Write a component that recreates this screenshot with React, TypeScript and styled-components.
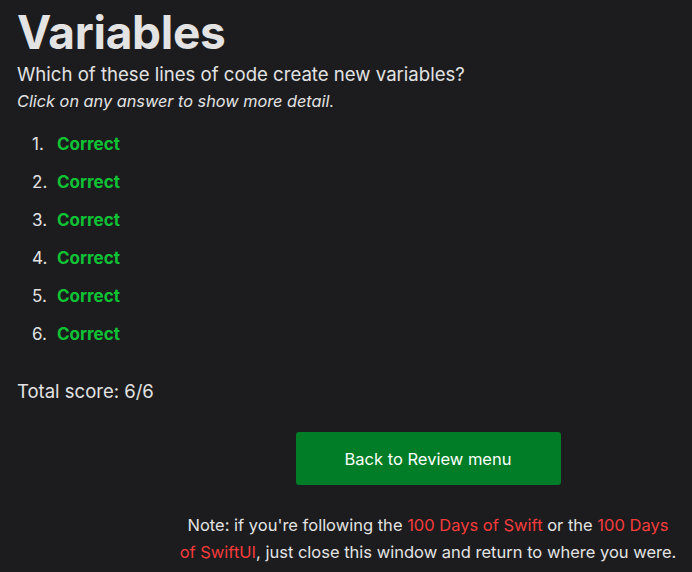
import React from "react";
import styled, { createGlobalStyle } from "styled-components";

const Global = createGlobalStyle`
  html, body { margin: 0; padding: 0; background: #1c1c1e; }
  body { font-family: Inter, "Noto Sans", sans-serif; color: #e3e3e3; }
`;

const Page = styled.main`
  padding: 4px 17px 0 17px;
  display: flex;
  flex-direction: column;
`;

const Title = styled.h1`
  margin: 0;
  font-size: 46px;
  font-weight: 700;
  line-height: 56px;
  color: #e3e3e3;
  letter-spacing: -0.3px;
`;

const Question = styled.p`
  margin: 0;
  font-size: 18.6px;
  line-height: 28px;
`;

const Hint = styled.p`
  margin: 0;
  font-size: 16.3px;
  line-height: 26px;
  font-style: italic;
`;

const Answers = styled.ol`
  margin: 19px 0 0 0;
  padding: 0 0 0 15px;
  list-style: none;
  counter-reset: answer;
  display: flex;
  flex-direction: column;
  gap: 16px;
  font-size: 17px;
  line-height: 22px;
`;

const Answer = styled.li`
  display: flex;
  counter-increment: answer;
  &::before {
    content: counter(answer) ".";
    width: 25px;
    color: #e3e3e3;
  }
`;

const Verdict = styled.span`
  color: #0fc335;
  font-weight: 700;
`;

const Score = styled.p`
  margin: 33px 0 0 0;
  font-size: 18.5px;
  line-height: 26px;
`;

const Footer = styled.section`
  align-self: flex-end;
  width: 498px;
  margin-right: -2px;
  display: flex;
  flex-direction: column;
  align-items: center;
`;

const Button = styled.button`
  margin-top: 28px;
  width: 265px;
  height: 53px;
  border: none;
  border-radius: 3px;
  background: #007d26;
  color: #ffffff;
  font-family: Inter, "Noto Sans", sans-serif;
  font-size: 16.5px;
`;

const Note = styled.p`
  margin: 27px 0 0 0;
  text-align: center;
  font-size: 16.5px;
  line-height: 27px;
`;

const Link = styled.a`
  color: #f63b3b;
  text-decoration: none;
`;

export default function App() {
  const answers = [1, 2, 3, 4, 5, 6];
  return (
    <>
      <Global />
      <Page>
        <Title>Variables</Title>
        <Question>Which of these lines of code create new variables?</Question>
        <Hint>Click on any answer to show more detail.</Hint>
        <Answers>
          {answers.map((n) => (
            <Answer key={n}>
              <Verdict>Correct</Verdict>
            </Answer>
          ))}
        </Answers>
        <Score>Total score: 6/6</Score>
        <Footer>
          <Button>Back to Review menu</Button>
          <Note>
            Note: if you're following the <Link href="#">100 Days of Swift</Link> or the{" "}
            <Link href="#">100 Days of SwiftUI</Link>, just close this window and return to where you were.
          </Note>
        </Footer>
      </Page>
    </>
  );
}
